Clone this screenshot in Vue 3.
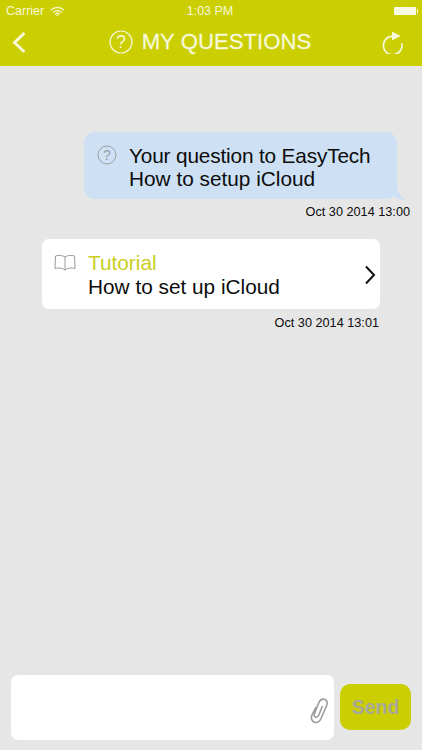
<script setup>
const messages = {
  question: ['Your question to EasyTech', 'How to setup iCloud'],
  tutorial: 'How to set up iCloud',
}
</script>

<template>
  <div class="screen">
    <header class="top">
      <div class="status">
        <div class="status-left">
          <span>Carrier</span>
          <svg width="15" height="11" viewBox="0 0 15 11" fill="none" stroke="#f4f6c8" stroke-width="1.5">
            <path d="M1 4 C4.5 .8 10.5 .8 14 4" />
            <path d="M3.2 6.2 C5.5 4.2 9.5 4.2 11.8 6.2" />
            <path d="M5.4 8.2 C6.5 7.3 8.5 7.3 9.6 8.2" />
            <path d="M6.4 9.2 L7.5 10.4 L8.6 9.2 Q7.5 8.4 6.4 9.2Z" fill="#f4f6c8" stroke="none" />
          </svg>
        </div>
        <span class="clock">1:03 PM</span>
        <div class="battery"><i></i></div>
      </div>
      <nav class="nav">
        <svg class="back" width="16" height="24" viewBox="0 0 16 24" fill="none" stroke="#f6f8d8" stroke-width="3">
          <path d="M13.5 3 L3.5 12.5 L13.5 22" />
        </svg>
        <div class="title">
          <svg width="24" height="24" viewBox="0 0 24 24">
            <circle cx="12" cy="12" r="11" fill="none" stroke="#f6f8d8" stroke-width="1.2" />
            <text x="12" y="18.2" text-anchor="middle" class="q-mark">?</text>
          </svg>
          <span>MY QUESTIONS</span>
        </div>
        <svg class="reload" width="22" height="24" viewBox="0 0 22 24" fill="none">
          <path d="M11.7 6.2 A9.3 9.3 0 1 0 20.7 13.2" stroke="#f6f8d8" stroke-width="1.7" />
          <path d="M11 1.5 L19.5 6 L11 10.5Z" fill="#f6f8d8" />
        </svg>
      </nav>
    </header>

    <main class="chat">
      <div class="row-question">
        <div class="bubble">
          <svg class="bubble-icon" width="20" height="20" viewBox="0 0 20 20">
            <circle cx="10" cy="10" r="9" fill="none" stroke="#9a9fa5" stroke-width="1" />
            <text x="10" y="15" text-anchor="middle" class="q-small">?</text>
          </svg>
          <p><span class="tight">{{ messages.question[0] }}</span><br />{{ messages.question[1] }}</p>
          <svg class="tail" width="14" height="14" viewBox="0 0 14 14">
            <path d="M0 0 L3 0 C3.5 5 6 10 11.5 13.2 C7 14 3 12.5 0 10Z" fill="#cde0f4" />
          </svg>
        </div>
        <time class="stamp">Oct 30 2014 13:00</time>
      </div>

      <div class="row-tutorial">
        <div class="card">
          <svg class="book" width="24" height="18" viewBox="0 0 24 18" fill="none" stroke="#9a9a9a" stroke-width="1">
            <path d="M12 3 C9 1 5.5 1 2.5 2 L2 14.5 C5.5 13.5 9 13.8 12 16 C15 13.8 18.5 13.5 22 14.5 L21.5 2 C18.5 1 15 1 12 3 Z" />
            <path d="M12 3 V16" />
          </svg>
          <div class="card-text">
            <div class="card-label">Tutorial</div>
            <div>{{ messages.tutorial }}</div>
          </div>
          <svg class="chevron" width="12" height="20" viewBox="0 0 12 20" fill="none" stroke="#111" stroke-width="2">
            <path d="M2 1.5 L10 10 L2 18.5" />
          </svg>
        </div>
        <time class="stamp stamp-tutorial">Oct 30 2014 13:01</time>
      </div>
    </main>

    <footer class="composer">
      <div class="input">
        <svg width="20" height="26" viewBox="0 0 20 26" fill="none" stroke="#9c9c9c" stroke-width="1.6">
          <path d="M7 9 L3 17 C1.5 20.5 3 23.5 5.5 24.3 C8 25 10.5 23.8 12 20.5 L17.5 8 C19 4.5 17.8 2 15.5 1.3 C13 .7 11 2 9.8 4.8 L5.5 15.5 C4.8 17.5 5.5 18.8 6.7 19.2 C8 19.6 9 18.8 9.8 17 L13.5 8" />
        </svg>
      </div>
      <button class="send" type="button">Send</button>
    </footer>
  </div>
</template>

<style>
html, body {
  margin: 0;
  background: #e6e6e6;
}
</style>

<style scoped>
.screen {
  width: 422px;
  height: 750px;
  display: flex;
  flex-direction: column;
  overflow: hidden;
  background: #e6e6e6;
  font-family: "Liberation Sans", Arial, sans-serif;
  color: #0c0c0c;
}

.top {
  height: 66px;
  flex: none;
  background: #cbce00;
  color: #f6f8d8;
}

.status {
  height: 22px;
  display: flex;
  align-items: center;
  justify-content: space-between;
  position: relative;
  padding: 0 5px 0 6px;
  font-size: 12.5px;
}

.status-left {
  display: flex;
  align-items: center;
  gap: 6px;
}

.clock {
  position: absolute;
  left: 0;
  right: 2px;
  text-align: center;
  pointer-events: none;
}

.battery {
  width: 22px;
  height: 8px;
  margin-right: 1px;
  position: relative;
  background: #f8fae4;
  border-radius: 1px;
}

.battery i {
  position: absolute;
  right: -2px;
  top: 2px;
  width: 1px;
  height: 4px;
  background: #f8fae4;
}

.nav {
  height: 39px;
  display: flex;
  align-items: center;
  justify-content: space-between;
  padding: 0 19px 0 11px;
}

.title {
  display: flex;
  align-items: center;
  gap: 9px;
  font-size: 22.2px;
  margin-left: 12px;
  -webkit-text-stroke: 0.3px #f6f8d8;
}

.q-mark {
  font-family: "Liberation Sans", Arial, sans-serif;
  font-size: 18px;
  fill: #f6f8d8;
  stroke: none;
  -webkit-text-stroke: 0;
}

.chat {
  flex: 1;
  display: flex;
  flex-direction: column;
  padding-top: 66px;
}

.row-question {
  display: flex;
  flex-direction: column;
  align-items: flex-end;
  padding-right: 12px;
}

.bubble {
  width: 313px;
  height: 67px;
  margin-right: 13px;
  box-sizing: border-box;
  position: relative;
  display: flex;
  align-items: flex-start;
  gap: 12px;
  padding: 12px 0 0 13px;
  background: #cde0f4;
  border-radius: 11px;
}

.bubble p {
  margin: 0;
  font-size: 20.8px;
  line-height: 23px;
}

.tight {
  letter-spacing: -0.16px;
}

.bubble-icon {
  flex: none;
  margin-top: 1px;
}

.q-small {
  font-family: "Liberation Sans", Arial, sans-serif;
  font-size: 14px;
  fill: #9a9fa5;
}

.tail {
  position: absolute;
  right: -11px;
  bottom: -1px;
}

.stamp {
  font-size: 12.7px;
  line-height: 14px;
  margin-top: 6px;
}

.stamp-tutorial {
  margin-top: 7px;
  margin-right: 1px;
}

.row-tutorial {
  display: flex;
  flex-direction: column;
  align-items: flex-end;
  padding: 20px 42px 0 42px;
}

.card {
  width: 100%;
  height: 70px;
  box-sizing: border-box;
  display: flex;
  align-items: center;
  background: #fff;
  border-radius: 7px;
  padding: 0 4px 0 11px;
}

.book {
  flex: none;
  align-self: flex-start;
  margin-top: 15px;
}

.card-text {
  flex: 1;
  margin-left: 11px;
  padding-top: 2px;
  font-size: 20.8px;
  line-height: 24px;
}

.card-label {
  color: #c9cd1e;
}

.chevron {
  margin-top: 1px;
}

.composer {
  flex: none;
  height: 75px;
  box-sizing: border-box;
  display: flex;
  align-items: center;
  gap: 6px;
  padding: 0 11px 10px 11px;
}

.input {
  width: 323px;
  height: 65px;
  box-sizing: border-box;
  display: flex;
  align-items: center;
  justify-content: flex-end;
  padding: 6px 5px 0 0;
  background: #fff;
  border-radius: 7px;
}

.send {
  width: 71px;
  height: 46px;
  margin-top: -1px;
  border: 0;
  padding: 0;
  background: #cbce00;
  border-radius: 10px;
  color: #a8a89a;
  font-family: "Liberation Sans", Arial, sans-serif;
  font-size: 19.5px;
  font-weight: 700;
}
</style>
